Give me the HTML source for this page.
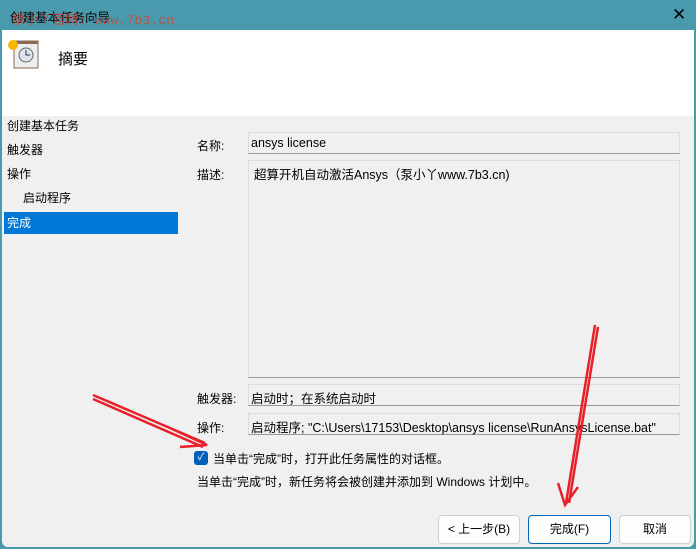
<!DOCTYPE html><html><head><meta charset="utf-8"><style>
*{margin:0;padding:0;box-sizing:border-box}
body{width:696px;height:549px;overflow:hidden;background:#4a9aae;font-family:"Liberation Sans","Noto Sans CJK SC",sans-serif;font-size:12px;color:#000;position:relative}
.a{position:absolute}
.box{position:absolute;background:#f0f0f0;border:1px solid #dcdcdc;border-bottom:1px solid #999;padding:3px 2px;white-space:nowrap;font-size:12.5px}
.btn{position:absolute;top:515px;height:29px;background:#fdfdfd;border:1px solid #d0d0d0;border-radius:4px;text-align:center;line-height:27px;font-size:12px}
</style></head><body>
<div class="a" style="left:10px;top:7px;font-size:12.5px">创建基本任务向导</div>
<div class="a" style="left:12px;top:9px;font-family:'Liberation Mono','Noto Sans CJK SC',monospace;font-size:13.3px;color:#c9483a;opacity:.85">泉小丫官网: www.7b3.cn</div>
<div class="a" style="left:672px;top:5px;font-size:17px">✕</div>
<div class="a" style="left:2px;top:30px;width:692px;height:86px;background:#fff"></div>
<div class="a" style="left:2px;top:116px;width:692px;height:431px;background:#f0f0f0;border-radius:0 0 6px 6px"></div>
<svg class="a" style="left:6px;top:38px" width="34" height="32"><rect x="8" y="3" width="24" height="27" fill="#eee" stroke="#8a6a55"/><rect x="8" y="3" width="24" height="3" fill="#8a6a55"/><circle cx="20" cy="17" r="7" fill="#dde4ec" stroke="#666"/><path d="M20 12v5h4" stroke="#333" fill="none"/><circle cx="7" cy="7" r="5" fill="#f9b800"/></svg>
<div class="a" style="left:58px;top:48px;font-size:15px">摘要</div>
<div class="a" style="left:7px;top:117px">创建基本任务</div>
<div class="a" style="left:7px;top:141px">触发器</div>
<div class="a" style="left:7px;top:165px">操作</div>
<div class="a" style="left:23px;top:189px">启动程序</div>
<div class="a" style="left:4px;top:212px;width:174px;height:22px;background:#0078d7;color:#fff;padding:2px 3px">完成</div>
<div class="a" style="left:197px;top:137px">名称:</div>
<div class="a" style="left:197px;top:166px">描述:</div>
<div class="a" style="left:197px;top:390px">触发器:</div>
<div class="a" style="left:197px;top:419px">操作:</div>
<div class="box" style="left:248px;top:132px;width:432px;height:22px">ansys license</div>
<div class="box" style="left:248px;top:160px;width:432px;height:218px;padding:3px 5px">超算开机自动激活Ansys（泵小丫www.7b3.cn)</div>
<div class="box" style="left:248px;top:384px;width:432px;height:22px">启动时；在系统启动时</div>
<div class="box" style="left:248px;top:413px;width:432px;height:22px">启动程序; "C:\Users\17153\Desktop\ansys license\RunAnsysLicense.bat"</div>
<div class="a" style="left:194px;top:451px;width:14px;height:14px;background:#005fb8;border-radius:3px;color:#fff;font-size:10px;text-align:center;line-height:14px">✓</div>
<div class="a" style="left:213px;top:450px">当单击“完成”时，打开此任务属性的对话框。</div>
<div class="a" style="left:197px;top:473px">当单击“完成”时，新任务将会被创建并添加到 Windows 计划中。</div>
<div class="btn" style="left:438px;width:82px">&lt; 上一步(B)</div>
<div class="btn" style="left:528px;width:83px;border-color:#0067c0">完成(F)</div>
<div class="btn" style="left:619px;width:72px">取消</div>
<svg class="a" style="left:0;top:0" width="696" height="549"><g stroke="#e8202a" stroke-width="2.5" fill="none"><path d="M93 395L205 443M93 399L203 447M170 428L207 445L180 447"/><path d="M595 325L566 503M598 327L569 503M558 483L565 505L578 487"/></g></svg>
</body></html>
